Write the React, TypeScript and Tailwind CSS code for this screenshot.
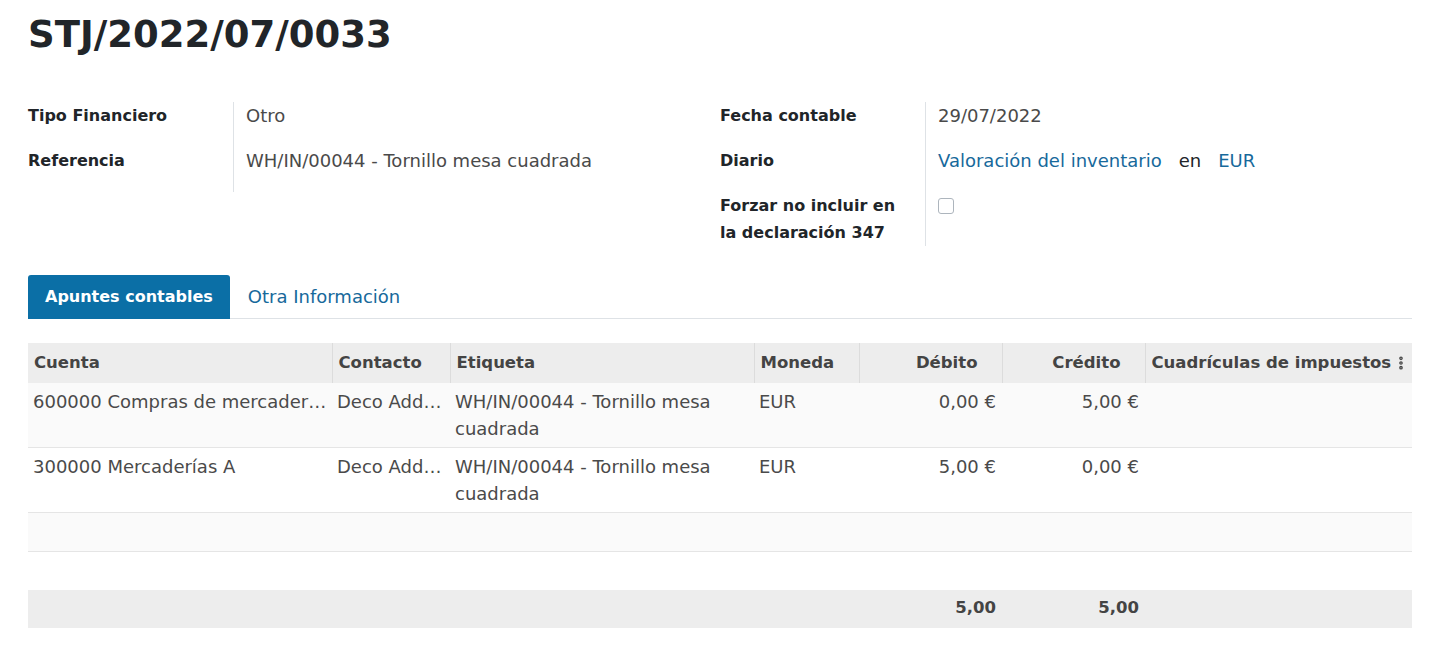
import { EllipsisVertical } from 'lucide-react';

const font = { fontFamily: '"DejaVu Sans", "Open Sans", sans-serif' };

type Field = { label: React.ReactNode; value: React.ReactNode };

function FieldGroup({ fields, tight }: { fields: Field[]; tight?: boolean }) {
  return (
    <div className="grid grid-cols-[206px_1fr] content-start">
      {fields.map((f, i) => {
        const pad = tight && i === fields.length - 1 ? 'pb-0' : 'pb-[18px]';
        return (
          <div key={i} className="contents">
            <div className={`border-r border-[#dee2e6] pr-3 text-[16px] leading-[27px] font-bold text-[#212529] ${pad}`}>
              {f.label}
            </div>
            <div className={`pl-3 text-[18px] leading-[27px] text-[#4a4a4a] ${pad}`}>{f.value}</div>
          </div>
        );
      })}
    </div>
  );
}

const rows = [
  { cuenta: '600000 Compras de mercaderías', contacto: 'Deco Addict', debito: '0,00 €', credito: '5,00 €', bg: 'bg-[#fafafa]' },
  { cuenta: '300000 Mercaderías A', contacto: 'Deco Addict', debito: '5,00 €', credito: '0,00 €', bg: 'bg-white' },
];

export default function App() {
  return (
    <div style={font} className="min-h-screen bg-white pl-[28px] pr-[17px] pt-[9px] text-[#212529]">
      <h1 className="text-[37px] leading-[52px] font-bold text-[#212529]">STJ/2022/07/0033</h1>

      <div className="mt-[41px] grid grid-cols-2">
        <FieldGroup
          fields={[
            { label: 'Tipo Financiero', value: 'Otro' },
            { label: 'Referencia', value: 'WH/IN/00044 - Tornillo mesa cuadrada' },
          ]}
        />
        <FieldGroup
          tight
          fields={[
            { label: 'Fecha contable', value: '29/07/2022' },
            {
              label: 'Diario',
              value: (
                <span className="whitespace-nowrap">
                  <span className="text-[#17699b]">Valoración del inventario</span>
                  <span className="mx-[17px] text-[#212529]">en</span>
                  <span className="text-[#17699b]">EUR</span>
                </span>
              ),
            },
            {
              label: (
                <>
                  Forzar no incluir en
                  <br />
                  la declaración 347
                </>
              ),
              value: <span className="mt-[6px] inline-block h-[16px] w-[16px] rounded-[3px] border border-[#adb5bd] align-top" />,
            },
          ]}
        />
      </div>

      <div className="mt-[29px] flex items-end border-b border-[#dee2e6]">
        <div className="mb-[-1px] flex h-[44px] items-center rounded-t-[3px] bg-[#0b6fa6] px-[17px] text-[16px] font-bold text-white">
          Apuntes contables
        </div>
        <div className="flex h-[43px] items-center px-[18px] text-[18px] text-[#17699b]">Otra Información</div>
      </div>

      <table className="mt-[24px] w-full table-fixed border-collapse text-[18px] text-[#4a4a4a]">
        <colgroup>
          <col className="w-[304px]" />
          <col className="w-[118px]" />
          <col className="w-[304px]" />
          <col className="w-[105px]" />
          <col className="w-[143px]" />
          <col className="w-[143px]" />
          <col />
        </colgroup>
        <thead>
          <tr className="h-[40px] bg-[#ededed] text-[16.5px] font-bold text-[#444]">
            <th className="border-r border-[#dcdcdc] px-[6px] text-left">Cuenta</th>
            <th className="border-r border-[#dcdcdc] px-[6px] text-left">Contacto</th>
            <th className="border-r border-[#dcdcdc] px-[6px] text-left">Etiqueta</th>
            <th className="border-r border-[#dcdcdc] px-[6px] text-left">Moneda</th>
            <th className="border-r border-[#dcdcdc] pr-[24px] text-right">Débito</th>
            <th className="border-r border-[#dcdcdc] pr-[24px] text-right">Crédito</th>
            <th className="pl-[6px] pr-[3px] text-left">
              <div className="flex items-center justify-between">
                <span className="truncate">Cuadrículas de impuestos</span>
                <EllipsisVertical className="h-4 w-4 shrink-0 text-[#444]" strokeWidth={3.5} />
              </div>
            </th>
          </tr>
        </thead>
        <tbody>
          {rows.map((r, i) => (
            <tr key={i} className={`${r.bg} border-b border-[#e5e5e5] align-top leading-[27px]`}>
              <td className="truncate px-[5px] py-[5px]">{r.cuenta}</td>
              <td className="truncate px-[5px] py-[5px]">{r.contacto}</td>
              <td className="px-[5px] py-[5px]">WH/IN/00044 - Tornillo mesa cuadrada</td>
              <td className="px-[5px] py-[5px]">EUR</td>
              <td className="px-[6px] py-[5px] text-right">{r.debito}</td>
              <td className="px-[6px] py-[5px] text-right">{r.credito}</td>
              <td className="px-[5px] py-[5px]" />
            </tr>
          ))}
          <tr className="h-[39px] border-b border-[#e5e5e5] bg-[#fafafa]">
            <td colSpan={7} />
          </tr>
          <tr className="h-[38px] bg-white">
            <td colSpan={7} />
          </tr>
        </tbody>
        <tfoot>
          <tr className="h-[38px] bg-[#ededed] text-[16.5px] font-bold text-[#444]">
            <td colSpan={4} />
            <td className="px-[6px] text-right">5,00</td>
            <td className="px-[6px] text-right">5,00</td>
            <td />
          </tr>
        </tfoot>
      </table>
    </div>
  );
}
